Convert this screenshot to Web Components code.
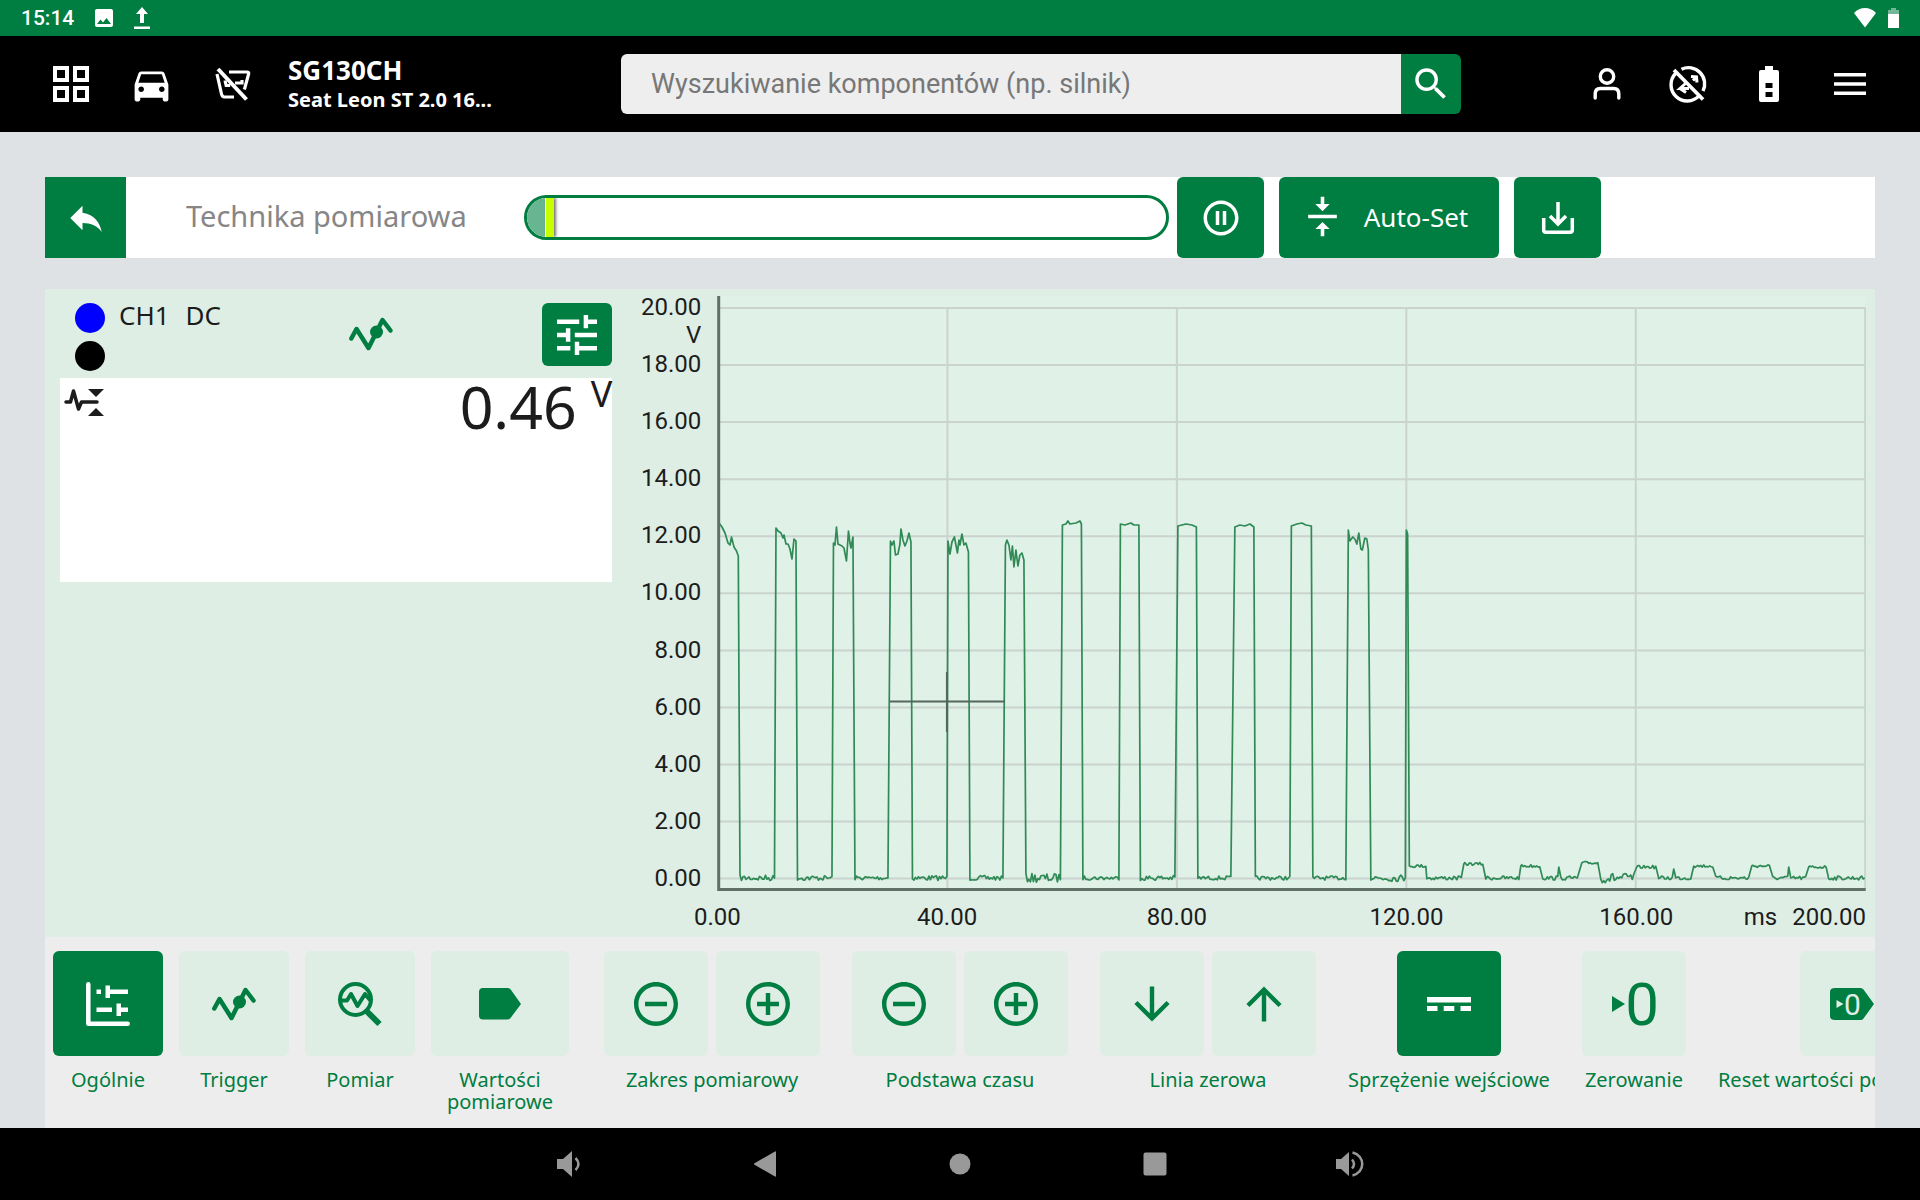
<!DOCTYPE html>
<html lang="pl">
<head>
<meta charset="utf-8">
<title>Technika pomiarowa</title>
<style>
  html, body { margin: 0; height: 100%; }
  body {
    --green: #007d40;
    --mint: #deeee5;
    --grey: #ededed;
    background: #dee2e5;
    font-family: "Noto Sans", "Open Sans", sans-serif;
    color: #1c1c1c;
  }
</style>
</head>
<body>
<scope-app></scope-app>
<script>
const define = (tag, html, setup) => {
  const template = document.createElement('template');
  template.innerHTML = `<style>*{box-sizing:border-box}button{font:inherit;border:0;margin:0;padding:0;cursor:pointer}</style>${html}`;
  customElements.define(tag, class extends HTMLElement {
    connectedCallback() {
      if (this.shadowRoot) return;
      this.attachShadow({ mode: 'open' }).append(template.content.cloneNode(true));
      if (setup) setup.call(this, this.shadowRoot);
    }
  });
};

/* Icons: [viewBox, markup] */
const ICONS = {
  image: ['0 0 24 24', '<path fill="currentColor" fill-rule="evenodd" d="M21 19V5c0-1.1-.9-2-2-2H5c-1.1 0-2 .9-2 2v14c0 1.1.9 2 2 2h14c1.1 0 2-.9 2-2zM8.500 13.500l2.500 3 3.500-4.500 4.500 6H5l3.500-4.500z"/>'],
  upload: ['0 0 16 22', '<path fill="currentColor" d="M8 0l6 7h-4v9H6V7H2zM0 19.500h16V22H0z"/>'],
  wifi: ['0 0 22 20', '<path fill="currentColor" d="M11 19.500 0 5C3 1.500 7 0 11 0s8 1.500 11 5z"/>'],
  cell: ['0 0 11 20', '<path fill="#fff" opacity=".45" d="M3 0h5v2h3v4H0V2h3z"/><path fill="#fff" d="M0 6h11v14H0z"/>'],
  grid: ['0 0 24 24', '<path fill="currentColor" fill-rule="evenodd" d="M3 3h8v8H3zM5 5v4h4V5zM13 3h8v8h-8zM15 5v4h4V5zM3 13h8v8H3zM5 15v4h4v-4zM13 13h8v8h-8zM15 15v4h4v-4z"/>'],
  car: ['0 0 24 24', '<path fill="currentColor" d="M18.920 6.010C18.720 5.420 18.160 5 17.500 5h-11c-.66 0-1.210.42-1.420 1.010L3 12v8c0 .55.45 1 1 1h1c.55 0 1-.45 1-1v-1h12v1c0 .55.45 1 1 1h1c.55 0 1-.45 1-1v-8l-2.080-5.990zM6.500 16c-.83 0-1.500-.67-1.500-1.500S5.670 13 6.500 13s1.500.67 1.500 1.500S7.330 16 6.500 16zm11 0c-.83 0-1.500-.67-1.500-1.500s.67-1.500 1.500-1.500 1.500.67 1.500 1.500-.67 1.500-1.500 1.500zM5 11l1.500-4.500h11L19 11H5z"/>'],
  plugOff: ['0 0 36 36', '<g fill="none" stroke="currentColor" stroke-width="3.200"><path d="M14 6h18q2.200 0 1.600 2l-4.200 15.500M2 8l4.500 20q.6 3 3 3H19M10 14.500l1.200 5h4M20 17h7v-3"/><path stroke-width="4" d="M3 3 31.500 33.500"/></g>'],
  search: ['0 0 24 24', '<path fill="currentColor" d="M15.500 14h-.79l-.28-.27A6.471 6.471 0 0 0 16 9.500 6.500 6.500 0 1 0 9.500 16c1.610 0 3.090-.59 4.230-1.570l.27.28v.79l5 4.990L20.490 19l-4.990-5zm-6 0C7.010 14 5 11.990 5 9.500S7.010 5 9.500 5 14 7.010 14 9.500 11.990 14 9.500 14z"/>'],
  user: ['0 0 36 36', '<g fill="none" stroke="currentColor" stroke-width="3.400"><circle cx="18" cy="10.500" r="6.700"/><path stroke-linecap="round" d="M6.200 32v-4c0-4 2-5.500 5-5.500h13.600c3 0 5 1.500 5 5.500v4"/></g>'],
  linkOff: ['0 0 36 36', '<g fill="none" stroke="currentColor" stroke-width="3.400"><path d="M11.500 3.200A16.200 16.200 0 0 1 33 25M29 29.900A16.200 16.200 0 0 1 5.500 7.500"/><path stroke-width="3.800" d="M4 4 33 33.500"/><path stroke-width="3" d="M21 10.500l5.500.5.500 5.500M26.500 11l-3.500 3.500M15.500 17.500 10 22.500h9M10 22.500l6 4"/></g>'],
  battery: ['0 0 20 36', '<path fill="currentColor" fill-rule="evenodd" d="M6 0h8v4h4q2 0 2 2v28q0 2-2 2H2q-2 0-2-2V6q0-2 2-2h4zM6.500 17v5h7v-5zM6.500 26v5h7v-5z"/>'],
  menu: ['0 0 32 22', '<path fill="currentColor" d="M0 0h32v3.500H0zM0 9.200h32v3.500H0zM0 18.500h32V22H0z"/>'],
  back: ['0 0 24 24', '<path fill="currentColor" d="M10 9V5l-7 7 7 7v-4.100c5 0 8.500 1.600 11 5.100-1-5-4-10-11-11z"/>'],
  pause: ['0 0 24 24', '<path fill="currentColor" d="M9 16h2V8H9v8zm3-14C6.480 2 2 6.480 2 12s4.480 10 10 10 10-4.480 10-10S17.520 2 12 2zm0 18c-4.410 0-8-3.590-8-8s3.590-8 8-8 8 3.590 8 8-3.590 8-8 8zm1-4h2V8h-2v8z"/>'],
  autoset: ['0 0 24 24', '<path fill="currentColor" d="M8 19h3v4h2v-4h3l-4-4-4 4zm8-14h-3V1h-2v4H8l4 4 4-4zM4 11v2h16v-2H4z"/>'],
  download: ['0 0 32 32', '<g fill="none" stroke="currentColor" stroke-width="3.500"><path stroke-linejoin="round" d="M1.700 16v12q0 2.200 2.200 2.200h24.200q2.200 0 2.200-2.200V16"/><path d="M16 0v21M8 14l8 8 8-8"/></g>'],
  tune: ['3 3 18 18', '<path fill="currentColor" d="M3 17v2h6v-2H3zM3 5v2h10V5H3zm10 16v-2h8v-2h-8v-2h-2v6h2zM7 9v2H3v2h4v2h2V9H7zm14 4v-2H11v2h10zm-6-4h2V7h4V5h-4V3h-2v6z"/>'],
  trigger: ['0 0 44 44', '<g fill="none" stroke="currentColor" stroke-width="4.500" stroke-linecap="round" stroke-linejoin="round"><path d="M2.300 26.500 7.500 17 19.500 36 33.500 8 41.500 18.500"/></g><circle cx="27.500" cy="20" r="6.500" fill="currentColor"/>'],
  minmax: ['0 0 40 28', '<path fill="none" stroke="currentColor" stroke-width="3.500" stroke-linecap="round" stroke-linejoin="round" d="M2 14h4.500L9.500 3l5 18 3-7H33"/><path fill="currentColor" d="M24 1h16l-8 8zM24 28h16l-8-8z"/>'],
  general: ['0 0 44 44', '<path fill="none" stroke="currentColor" stroke-width="4.500" stroke-linecap="round" stroke-linejoin="round" d="M2.300 2.300v39.400h39.400"/><path fill="currentColor" d="M10.500 7.500H15V12h-4.500zM19.500 3.500H24v4h18V12H24v4h-4.500zM10.500 25.500H26V30H10.500zM30.500 21.500H35v4h7V30h-7v4h-4.500z"/>'],
  magnifier: ['0 0 44 44', '<g fill="none" stroke="currentColor" stroke-width="4"><circle cx="17.500" cy="17.500" r="15.500"/><path stroke-linejoin="round" d="M3 18.500h6L13 12l6.500 12 7.500-12 5 6h1"/></g><path stroke="currentColor" stroke-width="6" d="M29 29.500 41.500 42"/>'],
  tag: ['0 0 44 44', '<path fill="currentColor" d="M5 6h24.500q2 0 3.200 1.600L43 22 32.700 35.800Q31.500 37.500 29.500 37.500H5q-4 0-4-4V10q0-4 4-4z"/>'],
  minus: ['2 2 20 20', '<path fill="currentColor" d="M7 11v2h10v-2H7zm5-9C6.480 2 2 6.480 2 12s4.480 10 10 10 10-4.480 10-10S17.520 2 12 2zm0 18c-4.410 0-8-3.590-8-8s3.590-8 8-8 8 3.590 8 8-3.590 8-8 8z"/>'],
  plus: ['2 2 20 20', '<path fill="currentColor" d="M13 7h-2v4H7v2h4v4h2v-4h4v-2h-4V7zm-1-5C6.480 2 2 6.480 2 12s4.480 10 10 10 10-4.480 10-10S17.520 2 12 2zm0 18c-4.410 0-8-3.590-8-8s3.590-8 8-8 8 3.590 8 8-3.590 8-8 8z"/>'],
  down: ['2 2 20 20', '<path fill="currentColor" d="M20 12l-1.410-1.410L13 16.170V4h-2v12.170l-5.580-5.590L4 12l8 8 8-8z"/>'],
  up: ['2 2 20 20', '<path fill="currentColor" d="M4 12l1.410 1.410L11 7.830V20h2V7.830l5.580 5.590L20 12l-8-8-8 8z"/>'],
  dc: ['0 0 44 44', '<path fill="currentColor" d="M0 15h44v5.500H0zM0 24h10.500v5H0zM16.700 24h10.600v5H16.700zM33.500 24H44v5H33.500z"/>'],
  zero: ['0 0 44 44', '<path fill="currentColor" d="M0 14v16l13-8z"/><text x="30" y="43" text-anchor="middle" font-family="Roboto,sans-serif" font-size="60" fill="currentColor">0</text>'],
  resetTag: ['0 0 44 44', '<path fill="currentColor" d="M5 6h25.500q2 0 3 1.500L44 22 33.500 36.500Q32.500 38 30.500 38H5q-5 0-5-4V10q0-4 5-4z"/><path fill="#deeee5" d="M6.500 18v8l7-4z"/><text x="22.500" y="33" text-anchor="middle" font-family="Roboto,sans-serif" font-size="30" fill="#deeee5">0</text>'],
  volDown: ['0 0 26 28', '<path fill="currentColor" d="M0 9h6l9-8v26l-9-8H0z"/><path fill="none" stroke="currentColor" stroke-width="2.500" d="M18.500 8q6 6 0 12"/>'],
  volUp: ['0 0 28 28', '<path fill="currentColor" d="M0 9h5l8-7v24l-8-7H0z"/><path fill="none" stroke="currentColor" stroke-width="2.500" d="M16 9.500q4 4.500 0 9M16.500 2.500c13 3 13 20 0 23"/>'],
  navBack: ['0 0 22 26', '<path fill="currentColor" d="M22 1v24q0 1-1 .5L.5 13.800q-1-.8 0-1.600L21 .5q1-.5 1 .5z"/>'],
  navHome: ['0 0 22 22', '<circle cx="11" cy="11" r="10.500" fill="currentColor"/>'],
  navRecent: ['0 0 24 24', '<rect x=".5" y=".5" width="23" height="23" rx="2" fill="currentColor"/>']
};

define('ui-icon', `<style>
  :host{display:inline-flex;flex:none}
  svg{display:block;overflow:visible}
</style>`, function (root) {
  const [box, body] = ICONS[this.getAttribute('name')];
  const w = this.getAttribute('w'), h = this.getAttribute('h') || w;
  root.innerHTML += `<svg viewBox="${box}" width="${w}" height="${h}" aria-hidden="true">${body}</svg>`;
});

define('status-bar', `<style>
  :host{display:flex;align-items:center;height:36px;padding:0 21px;background:var(--green);color:#fff;font:500 21px/36px Roboto,sans-serif}
  .left,.right{display:flex;align-items:center}
  .left{gap:18px}.right{gap:12px;margin-left:auto}
</style>
<div class="left"><time>15:14</time><ui-icon name="image" w="24"></ui-icon><ui-icon name="upload" w="16" h="22"></ui-icon></div>
<div class="right"><ui-icon name="wifi" w="22" h="20"></ui-icon><ui-icon name="cell" w="11" h="20"></ui-icon></div>`);

define('app-header', `<style>
  :host{display:flex;align-items:center;height:96px;padding:0 30px;background:#000;color:#fff}
  nav{display:flex}
  nav button{display:flex;align-items:center;justify-content:center;width:81px;height:60px;background:none;color:#fff}
  .vehicle{flex:0 0 348px;padding-left:15px;font-weight:700}
  .code{font-size:26px;line-height:32px}
  .model{font-size:20px;line-height:28px;white-space:nowrap}
  form{flex:0 1 840px;display:flex;height:60px;border-radius:6px;overflow:hidden}
  input{flex:1;min-width:0;border:0;padding:0 30px;background:#eee;font:27px Roboto,sans-serif;color:#333;outline:0}
  input::placeholder{color:#777;opacity:1}
  form button{display:flex;align-items:center;justify-content:center;width:60px;background:var(--green);color:#fff}
  .end{margin-left:auto}
</style>
<nav>
  <button aria-label="Menu główne"><ui-icon name="grid" w="48"></ui-icon></button>
  <button aria-label="Pojazd"><ui-icon name="car" w="45"></ui-icon></button>
  <button aria-label="Złącze"><ui-icon name="plugOff" w="36"></ui-icon></button>
</nav>
<div class="vehicle"><div class="code">SG130CH</div><div class="model">Seat Leon ST 2.0 16...</div></div>
<form onsubmit="return false">
  <input type="text" aria-label="Wyszukiwanie" placeholder="Wyszukiwanie komponentów (np. silnik)">
  <button aria-label="Szukaj"><ui-icon name="search" w="42"></ui-icon></button>
</form>
<nav class="end">
  <button aria-label="Użytkownik"><ui-icon name="user" w="36"></ui-icon></button>
  <button aria-label="Połączenie"><ui-icon name="linkOff" w="36"></ui-icon></button>
  <button aria-label="Bateria"><ui-icon name="battery" w="20" h="36"></ui-icon></button>
  <button aria-label="Menu"><ui-icon name="menu" w="32" h="22"></ui-icon></button>
</nav>`);

define('title-bar', `<style>
  :host{display:flex;align-items:stretch;height:81px;background:#fff}
  button{display:flex;align-items:center;justify-content:center;background:var(--green);color:#fff}
  .back{width:81px}
  h1{margin:0;flex:0 0 398px;padding-left:60px;font-size:29px;line-height:78px;font-weight:400;color:#868686;white-space:nowrap}
  .meter{flex:0 1 645px;align-self:center;height:45px;border:3px solid var(--green);border-radius:23px;overflow:hidden;display:flex}
  .fill{width:18px;background:#68b592}
  .mark{width:9px;background:#c8ff00;border-left:1px solid #fff;box-shadow:2px 0 3px #0008}
  .tools{display:flex;gap:15px;margin-left:8px}
  .tools button{width:87px;border-radius:6px}
  .tools .auto{width:220px;gap:20px;font-size:26px;line-height:36px;padding:0 9px 2px 0}
</style>
<button class="back" aria-label="Wstecz"><ui-icon name="back" w="42"></ui-icon></button>
<h1>Technika pomiarowa</h1>
<div class="meter" role="progressbar" aria-valuenow="4" aria-label="Bufor"><div class="fill"></div><div class="mark"></div></div>
<div class="tools">
  <button aria-label="Pauza"><ui-icon name="pause" w="42"></ui-icon></button>
  <button class="auto"><ui-icon name="autoset" w="43"></ui-icon>Auto-Set</button>
  <button aria-label="Zapisz"><ui-icon name="download" w="32"></ui-icon></button>
</div>`);

define('channel-panel', `<style>
  :host{display:block;flex:0 0 31%;padding:14px 0 0 15px}
  .head{display:flex;align-items:flex-start;height:75px;padding-left:15px}
  .dots{display:grid;gap:8px}
  .dots i{width:30px;height:30px;border-radius:50%;background:#00f}
  .dots i+i{background:#000}
  .name{display:flex;gap:16px;margin-left:14px;font-size:26px;line-height:24px;width:230px}
  ui-icon{color:var(--green)}
  .sig{margin:9px auto 0 0}
  .set{display:flex;align-items:center;justify-content:center;width:70px;height:63px;border-radius:6px;background:var(--green)}
  .set ui-icon{color:#fff}
  .read{display:flex;align-items:flex-start;height:204px;background:#fff;padding-left:4px}
  .read ui-icon{color:#1c1c1c;margin:10px auto 0 0}
  .value{font-size:59px;line-height:56px}
  .unit{font-size:36px;line-height:32px;margin-left:14px}
</style>
<div class="head">
  <div class="dots"><i></i><i></i></div>
  <div class="name"><span>CH1</span><span>DC</span></div>
  <ui-icon class="sig" name="trigger" w="44"></ui-icon>
  <button class="set" aria-label="Ustawienia kanału"><ui-icon name="tune" w="40"></ui-icon></button>
</div>
<div class="read"><ui-icon name="minmax" w="40" h="28"></ui-icon><span class="value">0.46</span><span class="unit">V</span></div>`);

/* Signal trace */
let seed = 7;
const rnd = () => ((seed = (seed * 16807) % 2147483647) / 2147483647) - .5;
const level = (x0, x1, y, amp) => {
  const out = [];
  for (let x = x0; x <= x1; x += 1.5) out.push([x, y + rnd() * amp]);
  return out;
};
const ZERO = 878;
const tops = [
  [[719, 523], [722, 527], [725, 533], [728, 543], [730, 545], [731.500, 537], [734, 547], [736.500, 551], [738.300, 556]],
  [[776, 528], [778, 531], [781, 533], [783, 538], [784, 535], [786, 544], [788, 544], [790, 549], [792, 559], [794, 539], [796, 541]],
  [[833.500, 543], [835, 545], [836.500, 527], [838, 544], [842, 546], [844, 548], [846.500, 561], [848.500, 531], [850, 543], [851, 548], [853, 537]],
  [[890.500, 541], [892, 545], [894, 541], [895.500, 555], [898, 554], [900, 544], [901, 529], [903, 540], [905, 546], [907, 541], [909, 533], [911, 542]],
  [[948, 541], [950, 554], [952, 542], [954.500, 537], [957.500, 553], [959, 540], [960, 545], [962, 534], [964, 545], [966, 543], [968.500, 552]],
  [[1005.500, 545], [1007, 540], [1009, 545], [1011, 560], [1012.500, 546], [1014, 567], [1016, 550], [1018, 566], [1020, 555], [1022, 553], [1024, 560]],
  [[1062.500, 525], [1066, 524], [1068, 521], [1070, 524], [1076, 523], [1080, 521], [1081.500, 524]],
  [[1120.500, 524], [1125, 525], [1131, 523], [1134, 525], [1139, 525]],
  [[1178, 526], [1186, 524], [1192, 525], [1196.500, 527]],
  [[1235, 527], [1240, 525], [1245, 526], [1250, 524], [1254, 527]],
  [[1291.500, 526], [1297, 524], [1302, 523], [1306, 525], [1311.500, 526]],
  [[1348.500, 530], [1350, 541], [1353, 537], [1355, 539], [1357, 544], [1359, 533], [1361, 549], [1362.500, 550], [1365, 538], [1367, 539], [1368.500, 550]]
];
const lows = [[740, 774.500, 6], [797.500, 832, 5], [855, 889, 4], [912.500, 947, 5], [970, 1004, 5], [1026, 1061, 9],
  [1083, 1119, 4], [1140.500, 1176, 5], [1198, 1232, 4], [1255.500, 1290, 4], [1313, 1347, 4], [1371, 1405, 7]];
const humps = [[1462, 1464, 1483, 1486, 864], [1519, 1521, 1540, 1543, 866], [1558, 1559, 1559, 1561, 867], [1578, 1582, 1599, 1601, 863],
  [1635, 1637, 1656, 1659, 867], [1673, 1674, 1674, 1676, 869], [1692, 1694, 1714, 1716, 866], [1749, 1752, 1770, 1773, 866],
  [1788, 1789, 1789, 1791, 867], [1807, 1809, 1827, 1829, 867], [1866]];
const points = [];
tops.forEach((top, i) => points.push(...top, ...level(lows[i][0], lows[i][1], ZERO, lows[i][2])));
points.push([1405.500, 878], [1406.500, 530], [1407.800, 534], [1409.500, 866], ...level(1411, 1426, 866, 3));
let x = 1427;
for (const [a, b, c, d, y] of humps) {
  points.push(...level(x, a, ZERO, x === 1601 ? 10 : 4));
  if (!d) break;
  points.push([b, y], ...level(b + 1, c, y, 3));
  x = d;
}
const TRACE = 'M' + points.map(p => p[0].toFixed(1) + ' ' + p[1].toFixed(1)).join('L');

define('wave-chart', `<style>
  :host{flex:1;min-width:0;display:grid;grid-template-columns:89px 1fr;grid-template-rows:1fr 34px;column-gap:16px;row-gap:12px;padding-right:9px;font:24px/28px Roboto,sans-serif}
  .y{grid-row:1/3;display:flex;flex-direction:column;text-align:right;padding:4px 0 16px}
  .y div{flex:1;min-height:0}
  .y span{display:block}
  svg{display:block;width:100%;height:calc(100% - 7px);margin-top:7px;min-height:0}
  .x{display:flex;margin-left:-10%;height:28px;text-align:center;white-space:nowrap}
  .x span{flex:1 1 0}
  .x .end{flex:.5 1 0;min-width:0;display:flex;justify-content:flex-end;gap:15px}
  .x .end b{font-weight:400}
</style>
<div class="y"></div>
<svg viewBox="717 296 1149 595" preserveAspectRatio="none" role="img" aria-label="Przebieg napięcia"></svg>
<div class="x"><span>0.00</span><span>40.00</span><span>80.00</span><span>120.00</span><span>160.00</span><div class="end"><b>ms</b><b>200.00</b></div></div>`,
function (root) {
  let labels = '', grid = '';
  for (let v = 20; v >= 0; v -= 2) {
    labels += `<div><span>${v.toFixed(2)}</span>${v === 20 ? '<span>V</span>' : ''}</div>`;
    grid += `M719 ${(308 + (20 - v) * 28.530).toFixed(1)}H1866`;
  }
  for (let i = 1; i <= 5; i++) grid += `M${(718 + i * 229.500).toFixed(1)} 308V888`;
  root.querySelector('.y').innerHTML = labels;
  root.querySelector('svg').innerHTML = `
    <path fill="#e0f1e8" d="M718 296h1148v595H718z"/>
    <path fill="none" stroke="#cad3ce" stroke-width="2" d="${grid}"/>
    <path fill="none" stroke="#2f8a55" stroke-width="1.700" stroke-linejoin="round" d="${TRACE}"/>
    <path fill="none" stroke="#55665d" stroke-width="2" d="M890 701.500H1005M947 672V732"/>
    <path fill="none" stroke="#5f7067" stroke-width="3" d="M718.700 296V889.500H1866"/>`;
});

/* A tool: one or more tiles over a caption. Attributes: icons, size (tile width), active */
define('tool-item', `<style>
  :host{display:flex;flex-direction:column;align-items:center;flex:none;color:var(--green)}
  .tiles{display:flex;gap:8px}
  button{display:flex;align-items:center;justify-content:center;width:104px;height:105px;border-radius:6px;background:var(--mint);color:var(--green)}
  :host([size=m]) button{width:110px}
  :host([size=l]) button{width:138px}
  :host([active]) button{background:var(--green);color:#fff}
  .label{margin-top:13px;font-size:20px;line-height:22px;text-align:center;white-space:nowrap}
  :host([size=l]) .label{width:138px;white-space:normal}
</style>
<div class="tiles"></div><div class="label" id="l"><slot></slot></div>`, function (root) {
  root.querySelector('.tiles').innerHTML = this.getAttribute('icons').split(' ')
    .map(n => `<button aria-labelledby="l"><ui-icon name="${n}" w="44"></ui-icon></button>`).join('');
});

define('tool-strip', `<style>
  :host{display:flex;height:191px;padding:14px 0 0 8px;gap:32px;background:var(--grey);overflow:hidden}
  .tabs{display:flex;gap:16px;margin-right:3px}
</style>
<div class="tabs">
  <tool-item size="m" active icons="general">Ogólnie</tool-item>
  <tool-item size="m" icons="trigger">Trigger</tool-item>
  <tool-item size="m" icons="magnifier">Pomiar</tool-item>
  <tool-item size="l" icons="tag">Wartości pomiarowe</tool-item>
</div>
<tool-item icons="minus plus">Zakres pomiarowy</tool-item>
<tool-item icons="minus plus">Podstawa czasu</tool-item>
<tool-item icons="down up">Linia zerowa</tool-item>
<tool-item active icons="dc">Sprzężenie wejściowe</tool-item>
<tool-item icons="zero">Zerowanie</tool-item>
<tool-item icons="resetTag">Reset wartości pomiarowych</tool-item>`);

define('nav-bar', `<style>
  :host{display:flex;justify-content:center;height:72px;background:#000}
  button{display:flex;align-items:center;justify-content:center;width:195px;background:none;color:#999}
</style>
<button aria-label="Ciszej"><ui-icon name="volDown" w="26" h="28"></ui-icon></button>
<button aria-label="Wstecz"><ui-icon name="navBack" w="22" h="26"></ui-icon></button>
<button aria-label="Ekran główny"><ui-icon name="navHome" w="22"></ui-icon></button>
<button aria-label="Ostatnie"><ui-icon name="navRecent" w="24"></ui-icon></button>
<button aria-label="Głośniej"><ui-icon name="volUp" w="28"></ui-icon></button>`);

define('scope-app', `<style>
  :host{display:flex;flex-direction:column;min-height:100vh}
  main{flex:1;display:flex;flex-direction:column;padding:45px 45px 0}
  .panel{flex:1;display:flex;margin-top:31px;background:var(--mint)}
</style>
<status-bar></status-bar>
<app-header></app-header>
<main>
  <title-bar></title-bar>
  <div class="panel"><channel-panel></channel-panel><wave-chart></wave-chart></div>
  <tool-strip></tool-strip>
</main>
<nav-bar></nav-bar>`);
</script>
</body>
</html>
